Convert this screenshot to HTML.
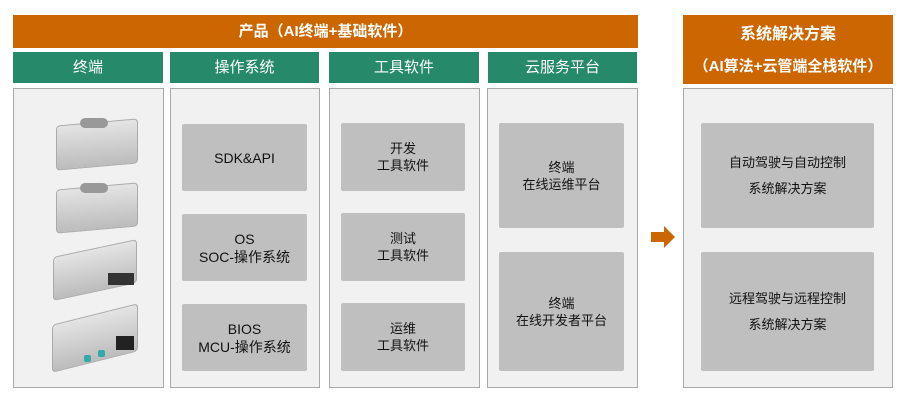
<!DOCTYPE html>
<html><head><meta charset="utf-8"><style>
body{margin:0;width:906px;height:406px;background:#fff;position:relative;overflow:hidden;font-family:"Liberation Sans","Noto Sans CJK SC",sans-serif;}
div{position:absolute;box-sizing:border-box}
.or{background:#cc6600;color:#fff;font-weight:bold;text-align:center}
.gr{background:#268a6a;color:#fff;text-align:center;font-size:15px;line-height:31px;top:52px;height:31px}
.pn{background:#f1f1f1;border:1px solid #a9a9a9;top:88px;height:300px}
.bx{background:#bfbfbf;color:#111;font-size:13px;display:flex;align-items:center;justify-content:center;text-align:center;line-height:20px;border-radius:2px}
.dev{background:linear-gradient(#e4e4e4,#bcbcbc);border-radius:4px;border:1px solid #aaa}
</style></head><body>
<div class="or" style="left:13px;top:15px;width:625px;height:33px;font-size:15px;line-height:33px">产品（AI终端+基础软件）</div>
<div class="gr" style="left:13px;width:150px">终端</div>
<div class="gr" style="left:170px;width:149px">操作系统</div>
<div class="gr" style="left:329px;width:150px">工具软件</div>
<div class="gr" style="left:488px;width:149px">云服务平台</div>
<div class="or" style="left:683px;top:15px;width:210px;height:69px;font-size:16px;"><div style="left:0;right:0;top:9px;line-height:22px">系统解决方案</div><div style="left:0;right:0;top:42px;font-size:15px;line-height:20px">（AI算法+云管端全栈软件）</div></div>

<div class="pn" style="left:13px;width:151px"></div>
<div class="dev" style="left:56px;top:122px;width:82px;height:45px;transform:skewY(-5deg)"></div>
<div style="left:80px;top:118px;width:28px;height:10px;background:#999;border-radius:5px"></div>
<div class="dev" style="left:56px;top:186px;width:82px;height:44px;transform:skewY(-5deg)"></div>
<div style="left:80px;top:183px;width:28px;height:10px;background:#999;border-radius:5px"></div>
<div class="dev" style="left:53px;top:248px;width:84px;height:44px;transform:skewY(-12deg)"></div>
<div style="left:108px;top:273px;width:26px;height:12px;background:#333"></div>
<div class="dev" style="left:52px;top:314px;width:86px;height:48px;transform:skewY(-14deg)"></div>
<div style="left:116px;top:336px;width:18px;height:14px;background:#222"></div>
<div style="left:84px;top:355px;width:7px;height:7px;background:#3aa;border-radius:2px"></div>
<div style="left:98px;top:350px;width:7px;height:7px;background:#3aa;border-radius:2px"></div>

<div class="pn" style="left:170px;width:150px"></div>
<div class="bx" style="left:182px;top:124px;width:125px;height:67px;font-size:14px">SDK&amp;API</div>
<div class="bx" style="left:182px;top:214px;width:125px;height:67px;font-size:14px;line-height:18px">OS<br>SOC-操作系统</div>
<div class="bx" style="left:182px;top:304px;width:125px;height:67px;font-size:14px;line-height:18px">BIOS<br>MCU-操作系统</div>

<div class="pn" style="left:329px;width:151px"></div>
<div class="bx" style="left:341px;top:123px;width:124px;height:68px;line-height:17px">开发<br>工具软件</div>
<div class="bx" style="left:341px;top:213px;width:124px;height:68px;line-height:17px">测试<br>工具软件</div>
<div class="bx" style="left:341px;top:303px;width:124px;height:68px;line-height:17px">运维<br>工具软件</div>

<div class="pn" style="left:487px;width:151px"></div>
<div class="bx" style="left:499px;top:123px;width:125px;height:105px;line-height:17px">终端<br>在线运维平台</div>
<div class="bx" style="left:499px;top:252px;width:125px;height:119px;line-height:17px">终端<br>在线开发者平台</div>

<svg style="position:absolute;left:651px;top:226px" width="25" height="22"><path d="M0 6H13V0L24 11L13 22V16H0Z" fill="#cc6600"/></svg>

<div class="pn" style="left:683px;width:210px"></div>
<div class="bx" style="left:701px;top:123px;width:173px;height:105px;line-height:26px">自动驾驶与自动控制<br>系统解决方案</div>
<div class="bx" style="left:701px;top:252px;width:173px;height:119px;line-height:26px">远程驾驶与远程控制<br>系统解决方案</div>
</body></html>
